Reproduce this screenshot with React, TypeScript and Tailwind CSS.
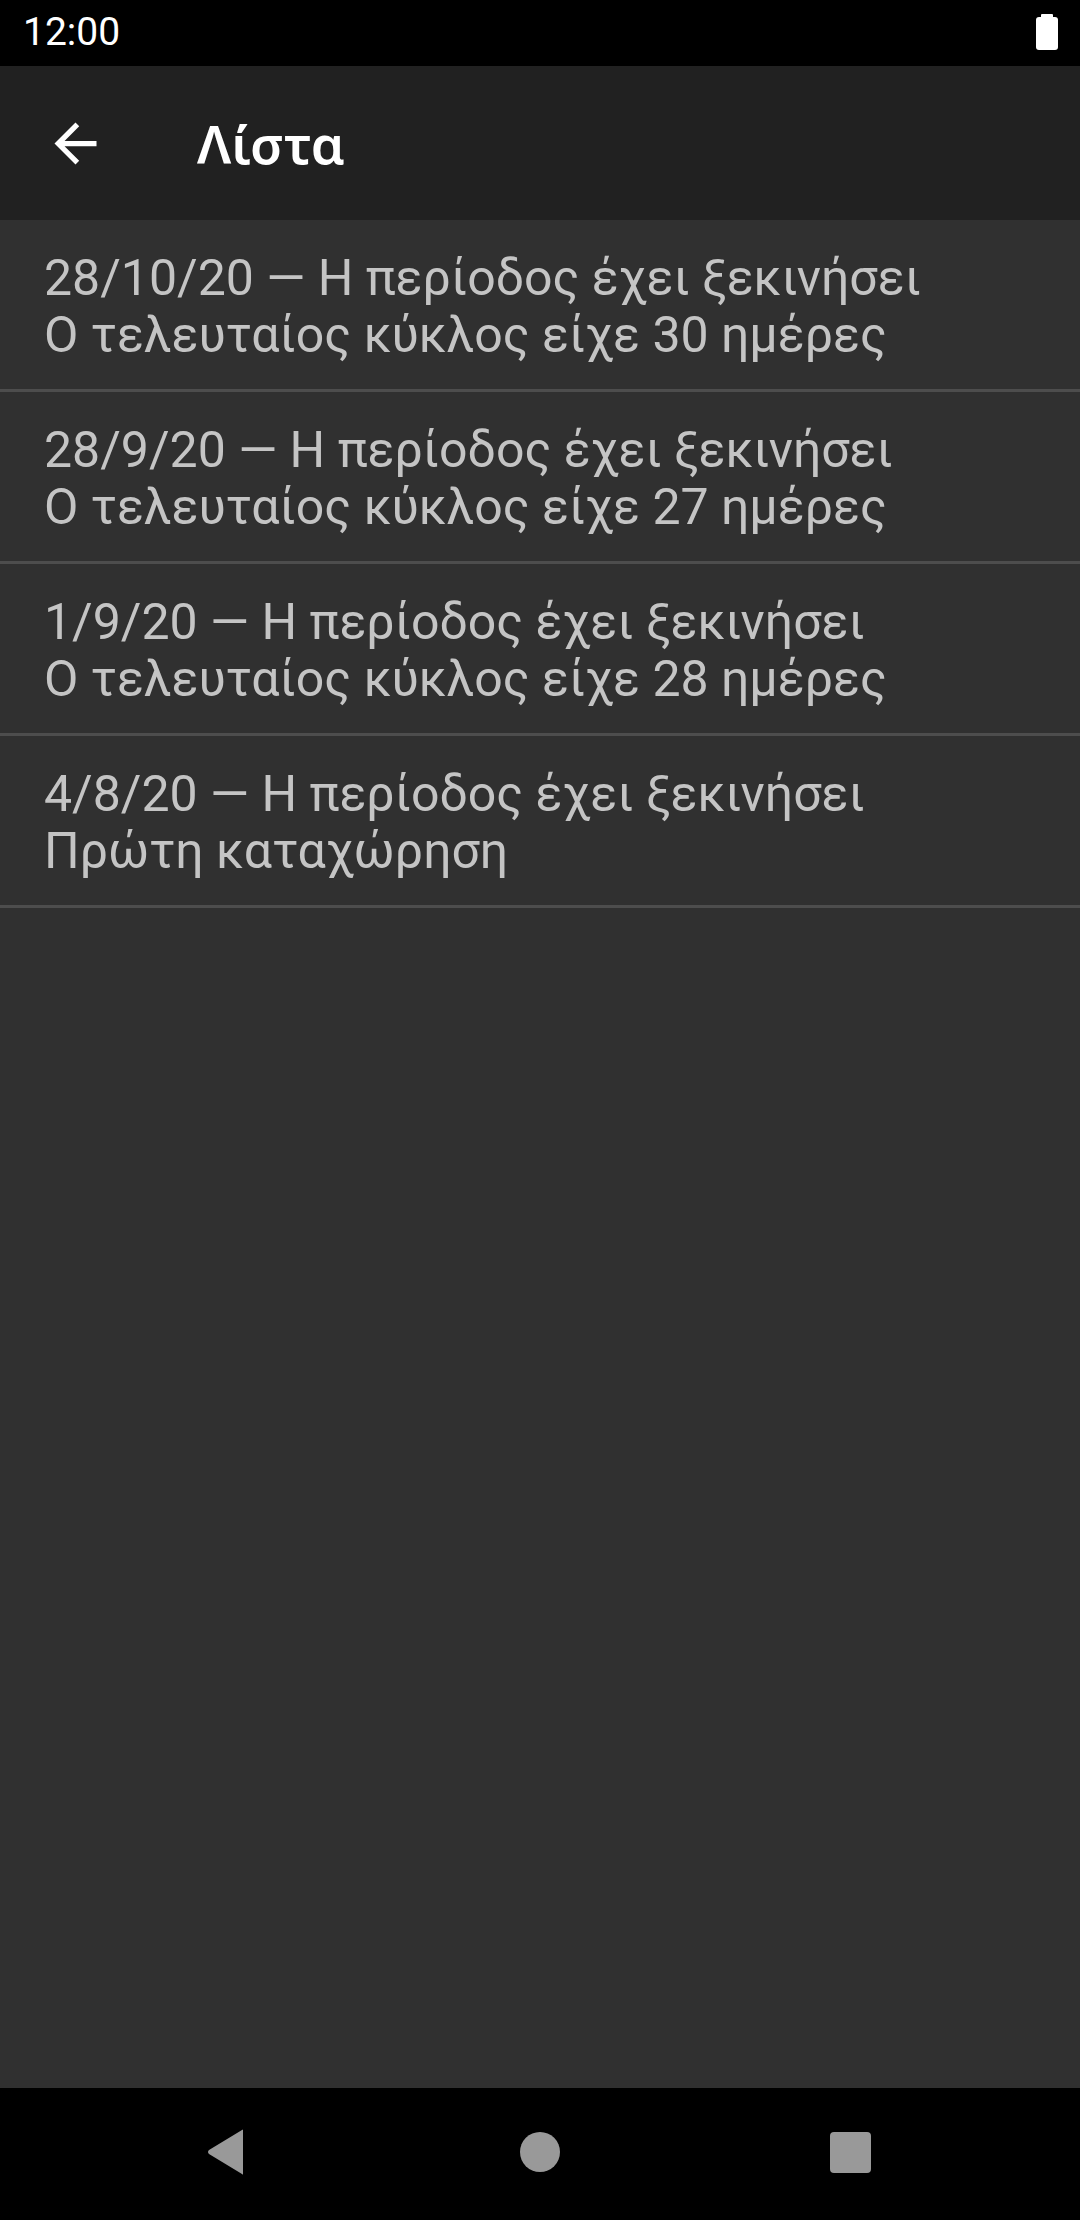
import React from 'react'

const entries = [
  { date: '28/10/20', note: 'Ο τελευταίος κύκλος είχε 30 ημέρες' },
  { date: '28/9/20', note: 'Ο τελευταίος κύκλος είχε 27 ημέρες' },
  { date: '1/9/20', note: 'Ο τελευταίος κύκλος είχε 28 ημέρες' },
  { date: '4/8/20', note: 'Πρώτη καταχώρηση' },
]

const StatusBar = () => (
  <div className="h-[66px] bg-black flex items-center justify-between pl-[23px] pr-[22px]">
    <span className="text-[39px] text-white font-['Roboto',sans-serif] leading-none -mt-[2px]">12:00</span>
    <svg width="22" height="36" viewBox="0 0 22 36" className="-mt-[3px]">
      <rect x="5" y="0" width="12" height="5" rx="1" fill="#fff" />
      <rect x="0" y="3" width="22" height="33" rx="3" fill="#fff" />
    </svg>
  </div>
)

const AppBar = () => (
  <div className="h-[154px] bg-[#212121] flex items-center">
    <div className="w-[63px] h-[63px] ml-[44px] mr-[90px]">
      <svg viewBox="0 0 24 24" width="63" height="63" fill="#fff">
        <path d="M20 11H7.83l5.59-5.59L12 4l-8 8 8 8 1.41-1.41L7.83 13H20v-2z" />
      </svg>
    </div>
    <h1 className="text-[53px] text-white font-semibold font-['Noto_Sans',sans-serif] leading-none">Λίστα</h1>
  </div>
)

const NavBar = () => (
  <div className="h-[132px] bg-black flex items-center pl-[207px]">
    <div className="flex items-center -mt-[4px]">
      <svg width="38" height="46" viewBox="0 0 38 46">
        <path d="M36 1 L36 45 Q36 46 35 45 L2 25 Q0 23 2 21 L35 1 Q36 0 36 1 Z" fill="#999" />
      </svg>
      <div className="w-[40px] h-[40px] rounded-full bg-[#999] ml-[275px]" />
      <div className="w-[41px] h-[41px] rounded-[4px] bg-[#999] ml-[270px]" />
    </div>
  </div>
)

export default function App() {
  return (
    <div className="w-[1080px] h-[2220px] flex flex-col bg-[#303030] font-['Roboto',sans-serif]">
      <StatusBar />
      <AppBar />
      <ul className="flex-1">
        {entries.map((e) => (
          <li
            key={e.date}
            className="pl-[44px] pt-[30px] pb-[25px] border-b-[3px] border-[#4d4d4d] text-[50px] leading-[57px] text-[#c4c4c4]"
          >
            <div>{e.date} — Η περίοδος έχει ξεκινήσει</div>
            <div>{e.note}</div>
          </li>
        ))}
      </ul>
      <NavBar />
    </div>
  )
}
